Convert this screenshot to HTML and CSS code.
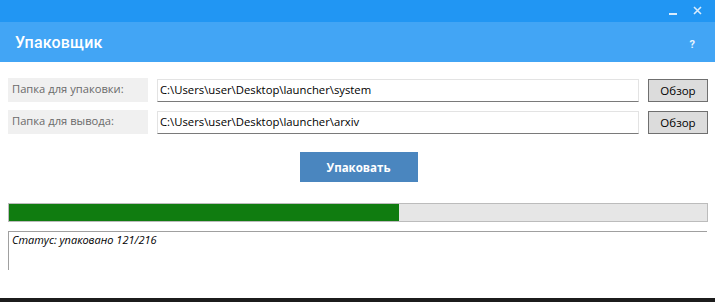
FILE: index.html
```html
<!DOCTYPE html>
<html lang="ru">
<head>
<meta charset="utf-8">
<title>Упаковщик</title>
<link rel="stylesheet" href="styles.css">
</head>
<body>
<div class="window">
  <div class="titlebar">
    <span class="tb-min"></span>
    <svg class="tb-close" width="9" height="9" viewBox="0 0 9 9"><path d="M1 1L8 8M8 1L1 8" stroke="#d8ecfd" stroke-width="1.6"/></svg>
  </div>
  <div class="header">
    <span class="app-title">Упаковщик</span>
    <span class="help">?</span>
  </div>
  <div class="content">
    <div class="form">
      <div class="label">Папка для упаковки:</div>
      <div class="input">C:\Users\user\Desktop\launcher\system</div>
      <div class="browse">Обзор</div>
      <div class="label">Папка для вывода:</div>
      <div class="input">C:\Users\user\Desktop\launcher\arxiv</div>
      <div class="browse">Обзор</div>
    </div>
    <div class="action">
      <div class="pack-btn">Упаковать</div>
    </div>
    <div class="progress"><div class="progress-fill" style="width:55.9%"></div></div>
    <div class="status">Статус: упаковано 121/216</div>
  </div>
  <div class="spacer"></div>
  <div class="taskbar"></div>
</div>
</body>
</html>
```
FILE: styles.css
```css
html, body {
  margin: 0;
  padding: 0;
  background: #fff;
}
.window {
  width: 715px;
  height: 302px;
  display: flex;
  flex-direction: column;
  font-family: "Open Sans", "Noto Sans", sans-serif;
}
.titlebar {
  height: 22px;
  background: #2196f3;
  display: flex;
  align-items: center;
  justify-content: flex-end;
  gap: 16px;
  padding-right: 13px;
}
.tb-min {
  width: 8px;
  height: 2px;
  background: #d8ecfd;
  margin-top: 6px;
}
.tb-close {
  margin-bottom: 2px;
}
.header {
  height: 40px;
  background: #42a5f5;
  display: flex;
  align-items: center;
  justify-content: space-between;
  padding: 0 20px 0 15px;
}
.app-title {
  font-family: Roboto, "Noto Sans", sans-serif;
  font-weight: 500;
  font-size: 16px;
  color: #fff;
  letter-spacing: 0.2px;
}
.help {
  font-family: Roboto, sans-serif;
  font-weight: 700;
  font-size: 11px;
  color: #e8f4fe;
  margin-top: 5px;
}
.content {
  padding: 16px 7px 0 8px;
  display: flex;
  flex-direction: column;
}
.form {
  display: grid;
  grid-template-columns: 140px 482px 60px;
  column-gap: 9px;
  row-gap: 8px;
}
.label {
  height: 24px;
  background: #f0f0f0;
  color: #6a6a6a;
  font-size: 11.2px;
  padding: 3px 0 0 4px;
  box-sizing: border-box;
}
.input {
  height: 23px;
  margin-top: 1px;
  box-sizing: border-box;
  border: 1px solid #e3e3e3;
  border-bottom: 1px solid #7a7a7a;
  font-size: 11.3px;
  color: #000;
  padding: 2px 0 0 2px;
  white-space: nowrap;
}
.browse {
  height: 23px;
  margin-top: 1px;
  box-sizing: border-box;
  border: 1px solid #6f6f6f;
  background: #dcdcdc;
  font-size: 11.5px;
  color: #000;
  display: flex;
  align-items: center;
  justify-content: center;
}
.action {
  display: flex;
  justify-content: center;
  margin-top: 18px;
}
.pack-btn {
  width: 118px;
  height: 30px;
  background: #4a86bf;
  color: #fff;
  font-weight: 700;
  font-size: 11.5px;
  display: flex;
  align-items: center;
  justify-content: center;
  margin-left: 1px;
}
.progress {
  margin-top: 21px;
  height: 19px;
  box-sizing: border-box;
  border: 1px solid #bcbcbc;
  background: #e6e6e6;
  width: 700px;
}
.progress-fill {
  height: 100%;
  background: #107c10;
}
.status {
  margin-top: 9px;
  height: 39px;
  width: 699px;
  box-sizing: border-box;
  border-top: 1px solid #a0a0a0;
  border-left: 1px solid #a0a0a0;
  font-style: italic;
  font-size: 11px;
  color: #000;
  padding: 0 0 0 3px;
}
.spacer {
  flex: 1;
}
.taskbar {
  height: 4px;
  background: #1c1c1c;
}
```
